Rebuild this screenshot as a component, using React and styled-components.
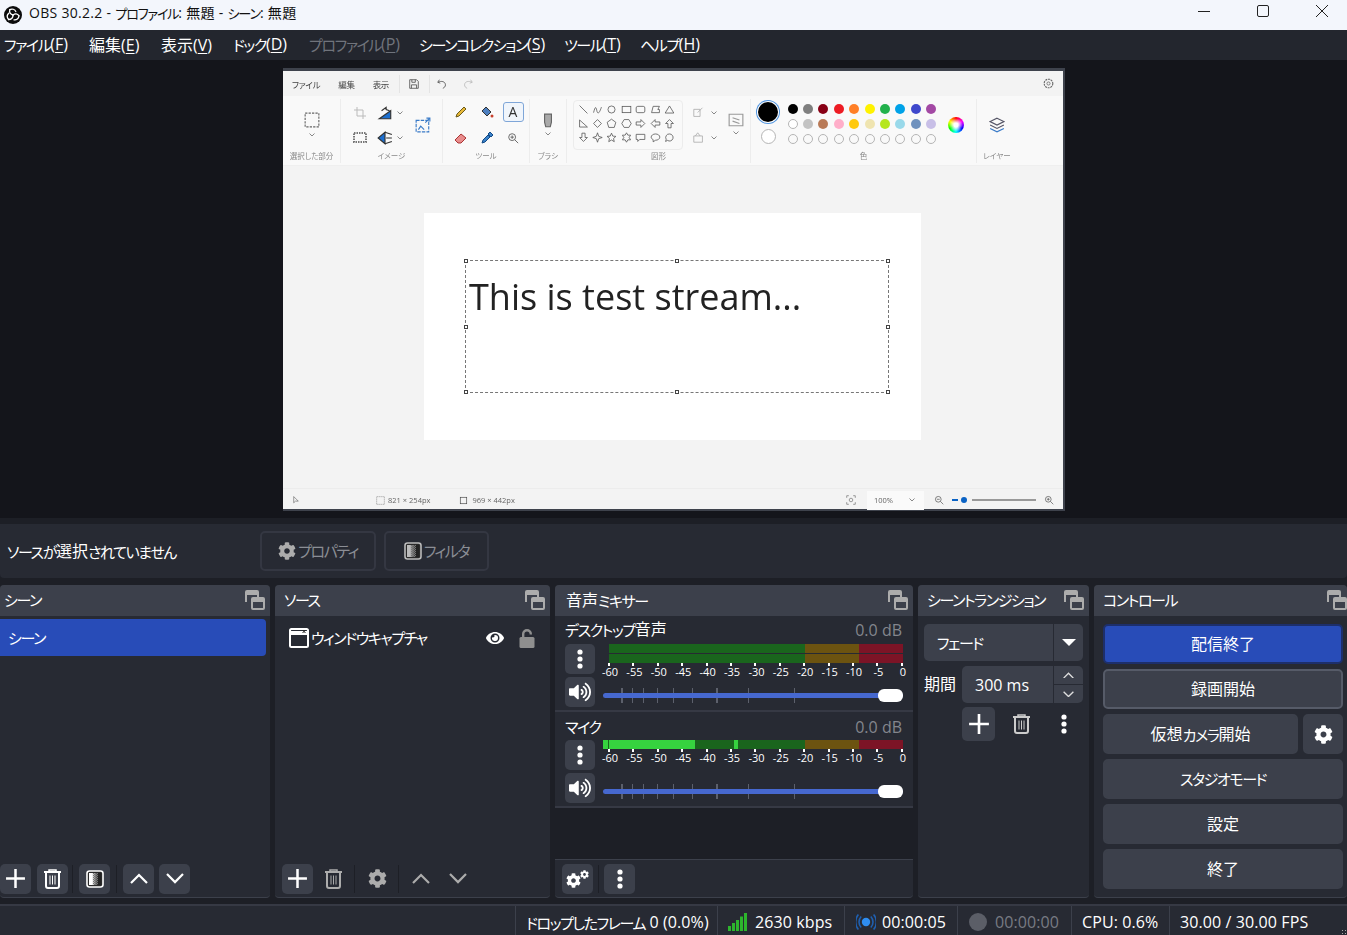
import React from 'react';
import styled, { createGlobalStyle } from 'styled-components';
import { FaCog, FaEye, FaVolumeUp } from 'react-icons/fa';

const Global = createGlobalStyle`
  html, body { margin: 0; padding: 0; background: #1d1f26; }
  body { font-family: "Open Sans", "Noto Sans CJK JP", sans-serif; font-size: 16px; color: #fff; }
  * { box-sizing: border-box; }
`;

const Window = styled.div`
  width: 1347px;
  height: 935px;
  overflow: hidden;
  display: flex;
  flex-direction: column;
  background: #1d1f26;
`;

const JpLine = styled.span`
  position: relative;
  top: ${(p) => p.$top ?? -1}px;
  white-space: nowrap;
`;
const Kana = styled.span`
  position: relative;
  top: 1px;
  font-size: 0.94em;
  font-feature-settings: "palt";
  letter-spacing: -0.095em;
`;
// the original face has narrow kana next to full width kanji, so only kana runs get squeezed
const Jp = ({ children, top }) => (
  <JpLine $top={top}>
    {String(children).split(/([\u3040-\u30ff]+)/).map((part, i) => (
      i % 2 ? <Kana key={i}>{part}</Kana> : part
    ))}
  </JpLine>
);

/* ---- title + menu ---- */
const TitleBar = styled.div`
  height: 30px;
  background: #f3f6fc;
  color: #111;
  display: flex;
  align-items: center;
  padding-left: 4px;
  font-size: 14px;
`;
const TitleText = styled.div`
  margin-left: 7px;
  flex: 1;
  position: relative;
  top: -3px;
  letter-spacing: 0.3px;
`;
const WinButtons = styled.div`
  display: flex;
  height: 100%;
  margin-right: -4px;
`;
const WinButton = styled.div`
  width: 59px;
  display: flex;
  align-items: center;
  justify-content: center;
  padding-bottom: 8px;
`;
const MenuBar = styled.div`
  height: 30px;
  background: #23262e;
  display: flex;
  align-items: center;
  padding: 0 0 3px 4px;
  gap: 20px;
`;
const MenuItem = styled.span`
  width: ${(p) => p.$w}px;
  flex: none;
  color: ${(p) => (p.$off ? '#70747c' : '#fff')};
  white-space: nowrap;
  u { text-underline-offset: 2px; }
`;

/* ---- preview ---- */
const Preview = styled.div`
  height: 458px;
  background: #14151b;
  padding: 8px 0 0 283px;
`;
const Paint = styled.div`
  width: 782px;
  height: 443px;
  background: #f3f3f3;
  border-top: 3px solid #3e424c;
  border-right: 2px solid #3e424c;
  border-bottom: 2px solid #3e424c;
  display: flex;
  flex-direction: column;
  color: #444;
  font-size: 8px;
  filter: blur(0.3px);
`;
const PaintMenu = styled.div`
  height: 25px;
  display: flex;
  align-items: center;
  padding: 0 9px 0 9px;
  font-size: 8.5px;
`;
const PaintMenuLabel = styled.span`
  margin-right: ${(p) => p.$mr}px;
  font-feature-settings: "palt";
  letter-spacing: -0.3px;
  white-space: nowrap;
`;
const VRule = styled.div`
  width: 1px;
  height: 18px;
  background: ${(p) => (p.$clear ? 'transparent' : '#e4e4e4')};
  margin: ${(p) => p.$m || '0'};
`;
const Spacer = styled.div`
  flex: 1;
`;
const Ribbon = styled.div`
  height: 70px;
  background: #f9f9f9;
  display: flex;
  border-bottom: 1px solid #efefef;
`;
const Group = styled.div`
  width: ${(p) => p.$w}px;
  flex: none;
  border-right: ${(p) => (p.$last ? '0' : '1px solid #ededed')};
  display: flex;
  flex-direction: column;
  height: 64px;
  margin-top: 3px;
`;
const GroupBody = styled.div`
  flex: 1;
  display: flex;
  min-height: 0;
`;
const GroupLabel = styled.div`
  height: 11px;
  line-height: 9px;
  text-align: center;
  font-size: 7.5px;
  color: #888;
  font-feature-settings: "palt";
  white-space: nowrap;
`;
const IconGrid = styled.div`
  display: grid;
  grid-template-columns: ${(p) => p.$tpl};
  grid-auto-rows: ${(p) => p.$rh}px;
  justify-items: center;
  align-items: center;
  padding: ${(p) => p.$pad || '0'};
`;
const CenterCol = styled.div`
  flex: 1;
  display: flex;
  flex-direction: column;
  align-items: center;
  padding-top: ${(p) => p.$top || 0}px;
  gap: ${(p) => p.$gap || 0}px;
`;
const TextTool = styled.div`
  width: 21px;
  height: 20px;
  border: 1px solid #7fa6d8;
  border-radius: 3px;
  background: #f0f5fb;
  font-size: 14px;
  line-height: 18px;
  text-align: center;
  color: #333;
`;
const ShapesBox = styled.div`
  width: 110px;
  height: 50px;
  margin: 1px 0 0 6px;
  border: 1px solid #ececec;
  border-radius: 4px;
  overflow: hidden;
  padding: 1px 0 0 2px;
`;
const Swatches = styled.div`
  display: grid;
  grid-template-columns: repeat(10, 15.4px);
  grid-auto-rows: 15.4px;
  justify-items: center;
  align-items: center;
  margin-top: 2px;
`;
const Swatch = styled.div`
  width: 10px;
  height: 10px;
  border-radius: 50%;
  background: ${(p) => p.$c || 'transparent'};
  border: ${(p) => (p.$c && p.$c !== '#fff' ? '0' : '1px solid #b5b5b5')};
`;
const CurrentCol = styled.div`
  width: 34px;
  display: flex;
  flex-direction: column;
  align-items: center;
  gap: 7px;
  padding-top: 3px;
`;
const CurrentBlack = styled.div`
  width: 20px;
  height: 20px;
  border-radius: 50%;
  background: #000;
  box-shadow: 0 0 0 1px #fff, 0 0 0 2px #4f94e0;
`;
const CurrentWhite = styled.div`
  width: 15px;
  height: 15px;
  border-radius: 50%;
  background: #fff;
  border: 1px solid #b5b5b5;
`;
const Wheel = styled.div`
  width: 16px;
  height: 16px;
  margin: 18px 0 0 9px;
  border-radius: 50%;
  background: radial-gradient(circle, #fff 0 18%, transparent 60%),
    conic-gradient(#f00, #f0f, #00f, #0ff, #0f0, #ff0, #f00);
`;
const Workspace = styled.div`
  flex: 1;
  padding: 47px 0 0 141px;
  background: #f3f3f3;
`;
const Canvas = styled.div`
  position: relative;
  width: 497px;
  height: 227px;
  background: #fff;
`;
const Selection = styled.div`
  position: absolute;
  left: 41px;
  top: 47px;
  width: 424px;
  height: 133px;
  border: 1px dashed #777;
  color: #222;
  font-size: 36px;
  line-height: 48px;
  padding: 12px 0 0 3px;
  white-space: nowrap;
`;
const Handle = styled.div`
  position: absolute;
  width: 4px;
  height: 4px;
  background: #fff;
  border: 1px solid #444;
  left: ${(p) => p.$x}%;
  top: ${(p) => p.$y}%;
  transform: translate(-50%, -50%);
`;
const PaintStatus = styled.div`
  height: 21px;
  display: flex;
  align-items: center;
  border-top: 1px solid #ececec;
  padding: 2px 0 0 9px;
  font-size: 7.5px;
  color: #666;
`;
const PaintStatusText = styled.span`
  margin: ${(p) => p.$m};
`;
const ZoomBox = styled.div`
  width: 57px;
  height: 19px;
  background: #fafafa;
  display: flex;
  align-items: center;
  justify-content: space-between;
  padding: 0 9px 0 7px;
  margin: 0 10px 0 11px;
`;
const ZoomTrack = styled.div`
  width: 84px;
  height: 2px;
  margin: 0 8px;
  background: linear-gradient(to right, #0a62c4 0 6px, transparent 6px 20px, #999 20px);
  position: relative;
`;
const ZoomThumb = styled.div`
  position: absolute;
  left: 9px;
  top: -2px;
  width: 6px;
  height: 6px;
  border-radius: 50%;
  background: #0a62c4;
`;

/* ---- context bar ---- */
const ContextBar = styled.div`
  height: 54px;
  margin-top: 6px;
  background: #272a33;
  border-radius: 0 0 4px 4px;
  display: flex;
  align-items: center;
  padding-left: 7px;
`;
const ContextLabel = styled.div`
  width: 253px;
`;
const ContextButton = styled.div`
  width: ${(p) => p.$w}px;
  height: 40px;
  margin-right: 8px;
  border: 2px solid #343742;
  border-radius: 5px;
  display: flex;
  align-items: center;
  justify-content: center;
  gap: 2px;
  color: #8b8e95;
`;

/* ---- docks ---- */
const Docks = styled.div`
  height: 313px;
  margin-top: 7px;
  display: flex;
  gap: 5px;
`;
const Dock = styled.div`
  width: ${(p) => p.$w}px;
  flex: none;
  background: #272a33;
  border-radius: 4px;
  border-bottom: 1px solid #3c404b;
  display: flex;
  flex-direction: column;
  overflow: hidden;
`;
const DockTitle = styled.div`
  height: 31px;
  flex: none;
  background: #3c404b;
  display: flex;
  align-items: center;
  justify-content: space-between;
  padding: 0 ${(p) => p.$pr ?? 5}px 2px ${(p) => p.$pl ?? 9}px;
`;
const DockBody = styled.div`
  flex: 1;
  min-height: 0;
  display: flex;
  flex-direction: column;
`;
const Toolbar = styled.div`
  height: 37px;
  flex: none;
  display: flex;
  align-items: center;
  padding-left: ${(p) => p.$pl ?? 0}px;
  gap: ${(p) => p.$gap ?? 5}px;
`;
const ToolButton = styled.div`
  width: 31px;
  height: 30px;
  flex: none;
  margin-left: ${(p) => p.$ml || 0}px;
  border-radius: 5px;
  background: ${(p) => (p.$flat ? 'transparent' : '#3c404b')};
  display: flex;
  align-items: center;
  justify-content: center;
  color: ${(p) => (p.$flat ? '#acacac' : '#fff')};
`;
const ToolSep = styled.div`
  width: 1px;
  height: 28px;
  background: #1d1f26;
  margin: 0 ${(p) => p.$r || 0}px 0 ${(p) => p.$l || 0}px;
`;
const SceneRow = styled.div`
  margin-top: 3px;
  width: 266px;
  height: 37px;
  background: #284cb8;
  border-radius: 0 4px 4px 0;
  display: flex;
  align-items: center;
  padding-left: 8px;
`;
const SourceRow = styled.div`
  margin-top: 3px;
  height: 37px;
  display: flex;
  align-items: center;
  padding-left: 14px;
`;
const SourceName = styled.div`
  flex: 1;
  margin-left: 2px;
`;
const SourceIcons = styled.div`
  display: flex;
  align-items: center;
  gap: 15px;
  padding-right: 15px;
`;
const GearPair = styled.div`
  display: flex;
  align-items: flex-start;
  height: 18px;
  svg:first-child { margin-top: 3px; }
  svg:last-child { margin-left: -1px; }
`;

/* ---- mixer ---- */
const MixerItem = styled.div`
  height: 96px;
  flex: none;
  border-bottom: 2px solid #363944;
  padding: 4px 10px 0 10px;
`;
const MixerHead = styled.div`
  display: flex;
  justify-content: space-between;
  height: 24px;
  line-height: 20px;
  padding: ${(p) => (p.$low ? 1 : 0)}px 1px 0 0;
`;
const DbValue = styled.span`
  color: #83868d;
`;
const MixerMain = styled.div`
  display: grid;
  grid-template-columns: 30px 1fr;
  column-gap: 8px;
  row-gap: 3px;
  grid-auto-rows: 30px;
`;
const MixerButton = styled.div`
  background: #3c404b;
  border-radius: 5px;
  display: flex;
  align-items: center;
  justify-content: center;
`;
const MeterWrap = styled.div`
  padding-left: ${(p) => (p.$mono ? 0 : 6)}px;
`;
const MeterBar = styled.div`
  height: 9px;
  margin-bottom: 1px;
  background: ${(p) => p.$bg};
`;
const Scale = styled.div`
  position: relative;
  display: flex;
  justify-content: space-between;
  margin: 0 1px 0 ${(p) => (p.$mono ? 6 : 0)}px;
  height: 14px;
`;
const ScaleMark = styled.div`
  width: 0;
  display: flex;
  justify-content: center;
  font-size: 11px;
  line-height: 16px;
  position: relative;
  left: 1px;
  &::before {
    content: '';
    position: absolute;
    top: -1px;
    left: -2px;
    width: 2px;
    height: 3px;
    background: #fff;
  }
`;
const Slider = styled.div`
  position: relative;
  align-self: center;
  height: 5px;
  margin-top: ${(p) => p.$top}px;
`;
const SliderTick = styled.div`
  position: absolute;
  left: ${(p) => p.$x}px;
  top: -5px;
  width: ${(p) => (p.$major ? 2 : 1)}px;
  height: 15px;
  background: #5c606c;
`;
const SliderFill = styled.div`
  position: absolute;
  inset: 0;
  border-radius: 3px;
  background: #4668cf;
`;
const SliderKnob = styled.div`
  position: absolute;
  right: 0;
  top: -4px;
  width: 25px;
  height: 13px;
  border-radius: 6px;
  background: #fff;
`;
const MixerFill = styled.div`
  flex: 1;
  background: #1d1f26;
  border-bottom: 1px solid #3c404b;
`;

/* ---- transitions ---- */
const TransBody = styled.div`
  padding: 8px 6px 0 6px;
  display: flex;
  flex-direction: column;
`;
const Combo = styled.div`
  height: 37px;
  border-radius: 5px;
  background: #3c404b;
  display: flex;
  align-items: center;
  margin-bottom: ${(p) => p.$mb ?? 5}px;
  flex: ${(p) => (p.$grow ? 1 : 'none')};
`;
const ComboText = styled.div`
  flex: 1;
  padding-left: 13px;
`;
const ComboSide = styled.div`
  width: 30px;
  height: 100%;
  border-left: 1px solid #272a33;
  display: flex;
  flex-direction: column;
  align-items: center;
  justify-content: center;
`;
const SpinHalf = styled.div`
  flex: 1;
  width: 100%;
  display: flex;
  align-items: center;
  justify-content: center;
  border-top: ${(p) => (p.$bottom ? '1px solid #272a33' : '0')};
`;
const DurationRow = styled.div`
  display: flex;
  align-items: flex-start;
`;
const DurationLabel = styled.div`
  width: 38px;
  height: 37px;
  line-height: 37px;
`;
const TransTools = styled.div`
  display: flex;
  align-items: center;
  padding-left: 38px;
`;
const PlusTall = styled(ToolButton)`
  width: 33px;
  height: 34px;
`;
const TransIcon = styled.div`
  width: ${(p) => p.$w}px;
  display: flex;
  justify-content: center;
`;

/* ---- controls ---- */
const ControlBody = styled.div`
  padding: 8px 4px 0 9px;
  display: flex;
  flex-direction: column;
  gap: 5px;
`;
const ControlButton = styled.div`
  height: 40px;
  flex: ${(p) => (p.$grow ? 1 : 'none')};
  width: ${(p) => (p.$square ? '40px' : 'auto')};
  border-radius: 5px;
  background: ${(p) => (p.$primary ? '#284cb8' : '#3c404b')};
  border: 2px solid ${(p) => (p.$primary ? '#1d2f6b' : p.$outlined ? '#565b68' : '#3c404b')};
  display: flex;
  align-items: center;
  justify-content: center;
`;
const ControlRow = styled.div`
  display: flex;
  gap: 5px;
`;

/* ---- status ---- */
const StatusBar = styled.div`
  height: 31px;
  margin-top: 6px;
  background: #272a33;
  border-top: 2px solid #363944;
  display: flex;
  padding-left: 515px;
  position: relative;
  letter-spacing: 0.1px;
`;
const StatusCell = styled.div`
  width: ${(p) => p.$w}px;
  flex: none;
  border-left: 1px solid #3c404b;
  display: flex;
  align-items: center;
  padding-left: ${(p) => p.$pl ?? 10}px;
  padding-top: 3px;
  gap: ${(p) => p.$gap ?? 6}px;
  white-space: nowrap;
  color: ${(p) => (p.$dim ? '#787b83' : '#fff')};
`;
const RecDot = styled.div`
  width: 18px;
  height: 18px;
  border-radius: 50%;
  background: #5b5e67;
`;
const Grip = styled.div`
  position: absolute;
  right: 0;
  bottom: 0;
  width: 6px;
  height: 6px;
  background: radial-gradient(circle, #aaa 0 1px, transparent 1px) 0 0 / 3px 3px;
`;

/* ---- icons ---- */
const Undock = () => (
  <svg width="20" height="20" viewBox="0 0 20 20" fill="none" stroke="#acacac" strokeWidth="2">
    <path d="M1 12V2a1 1 0 0 1 1-1h10a1 1 0 0 1 1 1v5" />
    <path d="M1 3.5h12" strokeWidth="3" />
    <rect x="7" y="8" width="12" height="11" rx="1" fill="#3c404b" />
    <path d="M7 10.5h12" strokeWidth="3" />
  </svg>
);
const Plus = ({ s = 21 }) => (
  <svg width={s} height={s} viewBox="0 0 20 20" stroke="#fff" strokeWidth="2.4"><path d="M10 1v18M1 10h18" /></svg>
);
const Trash = ({ c = '#fff' }) => (
  <svg width="19" height="20" viewBox="0 0 19 20" fill="none" stroke={c}>
    <path d="M1 3h17" strokeWidth="2" />
    <path d="M6 2.5V1h7v1.5" strokeWidth="1.5" />
    <path d="M3 4v13a2 2 0 0 0 2 2h9a2 2 0 0 0 2-2V4" strokeWidth="2" />
    <path d="M7 6.5v9M9.5 6.5v9M12 6.5v9" strokeWidth="1" />
  </svg>
);
const Dots = () => (
  <svg width="6" height="20" viewBox="0 0 6 20" fill="#fff">
    <circle cx="3" cy="3" r="2.6" /><circle cx="3" cy="10" r="2.6" /><circle cx="3" cy="17" r="2.6" />
  </svg>
);
const Chevron = ({ up, c = '#fff', w = 18 }) => (
  <svg width={w} height={w * 0.62} viewBox="0 0 18 11" fill="none" stroke={c} strokeWidth="2.2">
    <path d={up ? 'M1 10l8-8 8 8' : 'M1 1l8 8 8-8'} />
  </svg>
);
const FilterIcon = ({ id, c = '#fff', s = 18 }) => (
  <svg width={s} height={s} viewBox="0 0 18 18">
    <defs>
      <linearGradient id={id}>
        <stop offset="0.25" stopColor={c} /><stop offset="0.75" stopColor="#222" />
      </linearGradient>
      <pattern id={`${id}d`} width="2" height="2" patternUnits="userSpaceOnUse">
        <rect width="1" height="1" fill="#777" /><rect x="1" y="1" width="1" height="1" fill="#777" />
      </pattern>
    </defs>
    <rect x="1" y="1" width="16" height="16" rx="2.5" fill="#2a2a2a" stroke={c} strokeWidth="1.6" />
    <rect x="3" y="3" width="12" height="12" fill={`url(#${id})`} />
    <rect x="7" y="3" width="5" height="12" fill={`url(#${id}d)`} />
  </svg>
);
const WindowIcon = () => (
  <svg width="20" height="20" viewBox="0 0 20 20" fill="none">
    <rect x="1" y="1" width="18" height="18" rx="1.5" stroke="#fff" strokeWidth="2" />
    <path d="M1 3h18v4H1z" fill="#fff" />
    <path d="M13.5 2l3 3M16.5 2l-3 3" stroke="#222" />
  </svg>
);
const Lock = () => (
  <svg width="16" height="20" viewBox="0 0 16 20" fill="#8f8f8f">
    <path d="M3 9V6a5 5 0 0 1 10 0v.5h-2.4V6a2.6 2.6 0 0 0-5.2 0v3z" />
    <rect x="0.5" y="9" width="15" height="11" rx="1.5" />
  </svg>
);
const ObsLogo = () => (
  <svg width="18" height="18" viewBox="0 0 18 18" fill="none" stroke="#fff" strokeWidth="1.3" strokeLinecap="round">
    <circle cx="9" cy="9" r="9" fill="#0c0c0c" stroke="none" />
    <path d="M9 9C6.500 8.500 5 6.500 5.800 3.600" />
    <path d="M5.800 3.600C8 2.400 11 3.200 11.800 5.600" />
    <path d="M9 9C11 7.500 13.500 7.500 15 9.800" />
    <path d="M15 9.800C14.800 12.500 12.500 14.200 10 13.800" />
    <path d="M9 9C9.200 11.500 7.500 13.500 4.600 13.500" />
    <path d="M4.600 13.500C3 11.500 3 8.800 4.800 7.200" />
  </svg>
);
const Bars = () => (
  <svg width="19" height="18" viewBox="0 0 19 18" fill="#2db52d">
    <rect x="0" y="13" width="3" height="5" /><rect x="4" y="10" width="3" height="8" />
    <rect x="8" y="7" width="3" height="11" /><rect x="12" y="3.5" width="3" height="14.5" />
    <rect x="16" y="0" width="3" height="18" />
  </svg>
);
const Broadcast = () => (
  <svg width="20" height="20" viewBox="0 0 20 20" fill="none" stroke="#1f5fb0" strokeWidth="1.6">
    <circle cx="10" cy="10" r="4.2" fill="#2f8df0" stroke="none" />
    <path d="M5.2 4.5a8 8 0 0 0 0 11M14.8 4.5a8 8 0 0 1 0 11" />
    <path d="M2.4 2.5a11.5 11.5 0 0 0 0 15M17.6 2.5a11.5 11.5 0 0 1 0 15" />
  </svg>
);

/* paint's own little toolbar drawings */
const Pi = ({ s = 14, children, fill = 'none', c = '#555', sw = 1 }) => (
  <svg width={s} height={s} viewBox="0 0 14 14" fill={fill} stroke={c} strokeWidth={sw}>{children}</svg>
);
const Chev = () => (
  <svg width="6" height="4" viewBox="0 0 6 4" fill="none" stroke="#888"><path d="M.5.5 3 3 5.500.5" /></svg>
);

const shapes = [
  'M2 2l10 10',
  'M2 11c2-8 3-8 4-3s3 5 6-4',
  <circle key="c" cx="7" cy="7" r="4.500" />,
  <rect key="r" x="1.500" y="3" width="11" height="8" />,
  <rect key="rr" x="1.500" y="3" width="11" height="8" rx="2" />,
  'M2 11l2-8h8l-2 4h2v4z',
  'M7 2.500l5.500 9h-11z',
  'M2 2.500v9h10z',
  'M7 2l5 5-5 5-5-5z',
  'M7 1.500l5.500 4-2 6.500h-7l-2-6.500z',
  'M4 2h6l3 5-3 5H4L1 7z',
  'M1.500 5h6V2l5 5-5 5V9h-6z',
  'M12.500 5h-6V2l-5 5 5 5V9h6z',
  'M5 12.500V7H2l5-5 5 5H9v5.500z',
  'M5 1.500V7H2l5 5 5-5H9V1.500z',
  'M7 1l1.500 4.500L13 7l-4.500 1.500L7 13l-1.500-4.500L1 7l4.500-1.500z',
  'M7 1.500l1.600 3.700 4 .4-3 2.700.9 4L7 10.200l-3.500 2.100.9-4-3-2.700 4-.4z',
  'M7 1l1.700 3 3.500 0-1.800 3 1.800 3-3.500 0L7 13l-1.700-3-3.500 0 1.800-3-1.800-3 3.500 0z',
  'M1.500 3h11v6.500H6L3.500 12V9.500h-2z',
  'M7 2.500c3 0 5.500 1.800 5.500 4S10 10.500 7 10.500l-3 2v-2.800C2.500 9 1.500 8 1.500 6.500c0-2.200 2.500-4 5.500-4z',
  'M7 2.500a4.500 4.500 0 1 1-2.500 8.200L2 12l.8-2.700A4.500 4.500 0 0 1 7 2.500z',
  'M2 9c1-3 4-3 5 0 1-3 4-3 5 0',
  'M7 4l3 4H4z',
];

const row1 = ['#000', '#7f7f7f', '#880015', '#ed1c24', '#ff7f27', '#fff200', '#22b14c', '#00a2e8', '#3f48cc', '#a349a4'];
const row2 = ['#fff', '#c3c3c3', '#b97a57', '#ffaec9', '#ffc90e', '#efe4b0', '#b5e61d', '#99d9ea', '#7092be', '#c8bfe7'];
const row3 = Array(10).fill(null);

const PaintWindow = () => (
  <Paint>
    <PaintMenu>
      <PaintMenuLabel $mr={18}>ファイル</PaintMenuLabel>
      <PaintMenuLabel $mr={18}>編集</PaintMenuLabel>
      <PaintMenuLabel $mr={10}>表示</PaintMenuLabel>
      <VRule $m="0 8px 0 0" />
      <Pi s={12}><path d="M2 2h8l2 2v8H2zM4.500 2v3h4V2M4 12V8h6v4" /></Pi>
      <VRule $m="0 6px 0 9px" />
      <Pi s={12}><path d="M4 2 2 5l3 1M2.500 5C6 3 11 4 11 8c0 2-1 3-3 4" /></Pi>
      <VRule $clear $m="0 13px 0 0" />
      <Pi s={12} c="#bbb"><path d="M10 2l2 3-3 1M11.500 5C8 3 3 4 3 8c0 2 1 3 3 4" /></Pi>
      <Spacer />
      <Pi s={11} c="#666"><circle cx="7" cy="7" r="2" /><circle cx="7" cy="7" r="5.500" strokeDasharray="2.500 1" strokeWidth="1.400" /></Pi>
    </PaintMenu>
    <Ribbon>
      <Group $w={58}>
        <GroupBody>
          <CenterCol $top={13} $gap={5}>
            <Pi s={16} c="#666"><rect x="1" y="1" width="12" height="12" strokeDasharray="2 1" /></Pi>
            <Chev />
          </CenterCol>
        </GroupBody>
        <GroupLabel>選択した部分</GroupLabel>
      </Group>
      <Group $w={102}>
        <GroupBody>
          <IconGrid $tpl="25px 25px 6px" $rh={25} $pad="1px 0 0 6px">
            <Pi c="#bbb"><path d="M4 1v9h9M1 4h9v9" /></Pi>
            <Pi s={16} c="#333"><path d="M2 12h10V5z" fill="#1c6fd0" /><path d="M4 5l4-3v2l3 1" /></Pi>
            <Chev />
            <Pi c="#777"><path d="M1 2h12v9H1z" strokeDasharray="1.500 1" strokeWidth="2" /></Pi>
            <Pi s={16} c="#333"><path d="M7 2v10L1 7z" fill="#1c6fd0" /><path d="M7 2l6 2M7 12l6-2M13 7H8" /></Pi>
            <Chev />
          </IconGrid>
          <CenterCol $top={18}>
            <Pi s={16} c="#3a7bc8"><rect x="1" y="3" width="11" height="10" strokeDasharray="3 1" /><path d="M9 5l4-4M10 1h3v3M3 11l2-3 3 3" /></Pi>
          </CenterCol>
        </GroupBody>
        <GroupLabel>イメージ</GroupLabel>
      </Group>
      <Group $w={87}>
        <GroupBody>
          <IconGrid $tpl="repeat(3, 26px)" $rh={26} $pad="0 0 0 5px">
            <Pi c="#6a5a1a" fill="#e8b93a"><path d="M2 12l1-3 7-7 2 2-7 7z" /></Pi>
            <Pi c="#333" fill="#4d7fbf"><path d="M2 6l4-4 5 5-4 4z" /><circle cx="12" cy="11" r="1.500" fill="#c8402c" stroke="none" /></Pi>
            <TextTool>A</TextTool>
            <Pi c="#a33" fill="#e98d8d"><path d="M1 9l6-6 5 4-5 5H4z" /></Pi>
            <Pi c="#124a86" fill="#3b82c9"><path d="M2 12l1-3 5-5 2 2-5 5zM8 3l2-2 3 3-2 2z" /></Pi>
            <Pi s={12}><circle cx="6" cy="6" r="4" /><path d="M9 9l4 4M4 6h4M6 4v4" /></Pi>
          </IconGrid>
        </GroupBody>
        <GroupLabel>ツール</GroupLabel>
      </Group>
      <Group $w={37}>
        <GroupBody>
          <CenterCol $top={14} $gap={3}>
            <Pi s={16} c="#666" fill="#aaa"><path d="M4 1h6v7l-1 4H5L4 8z" /></Pi>
            <Chev />
          </CenterCol>
        </GroupBody>
        <GroupLabel>ブラシ</GroupLabel>
      </Group>
      <Group $w={184}>
        <GroupBody>
          <ShapesBox>
            <IconGrid $tpl="repeat(7, 14.4px)" $rh={14.4}>
              {shapes.map((d, i) => (
                <Pi key={i} s={11}>{typeof d === 'string' ? <path d={d} /> : d}</Pi>
              ))}
            </IconGrid>
          </ShapesBox>
          <IconGrid $tpl="repeat(2, 15px)" $rh={25} $pad="1px 0 0 8px">
            <Pi s={11} c="#aaa"><path d="M1 3h8v9H1zM6 7l6-6" /></Pi>
            <Chev />
            <Pi s={11} c="#aaa"><path d="M1 5h11v8H1zM3 5l3-4 3 4" /></Pi>
            <Chev />
          </IconGrid>
          <CenterCol $top={13} $gap={3}>
            <Pi s={16} c="#999"><path d="M1 2h12v10H1zM4 5l6 2M4 8l6 2" /></Pi>
            <Chev />
          </CenterCol>
        </GroupBody>
        <GroupLabel>図形</GroupLabel>
      </Group>
      <Group $w={226}>
        <GroupBody>
          <CurrentCol>
            <CurrentBlack />
            <CurrentWhite />
          </CurrentCol>
          <Swatches>
            {[...row1, ...row2, ...row3].map((c, i) => <Swatch key={i} $c={c} />)}
          </Swatches>
          <Wheel />
        </GroupBody>
        <GroupLabel>色</GroupLabel>
      </Group>
      <Group $w={40} $last>
        <GroupBody>
          <CenterCol $top={18}>
            <Pi s={16} c="#556"><path d="M7 1l6 3-6 3-6-3z" /><path d="M1 7l6 3 6-3" /><path d="M1 10l6 3 6-3" stroke="#3a7bc8" /></Pi>
          </CenterCol>
        </GroupBody>
        <GroupLabel>レイヤー</GroupLabel>
      </Group>
    </Ribbon>
    <Workspace>
      <Canvas>
        <Selection>
          This is test stream...
          {[[0, 0], [50, 0], [100, 0], [0, 50], [100, 50], [0, 100], [50, 100], [100, 100]].map(([x, y]) => (
            <Handle key={`${x}-${y}`} $x={x} $y={y} />
          ))}
        </Selection>
      </Canvas>
    </Workspace>
    <PaintStatus>
      <Pi s={8}><path d="M3 1v11l3-3h5z" /></Pi>
      <VRule $clear $m="0 0 0 75px" />
      <Pi s={9} c="#888"><rect x="1" y="1" width="12" height="12" strokeDasharray="2 1" /></Pi>
      <PaintStatusText $m="0 29px 0 3px">821 × 254px</PaintStatusText>
      <Pi s={9} c="#444"><rect x="2" y="2" width="10" height="10" /></Pi>
      <PaintStatusText $m="0 0 0 4px">969 × 442px</PaintStatusText>
      <Spacer />
      <Pi s={10} c="#777"><path d="M1 4V1h3M10 1h3v3M13 10v3h-3M4 13H1v-3" /><circle cx="7" cy="7" r="2.500" /></Pi>
      <ZoomBox>100%<Chev /></ZoomBox>
      <Pi s={10}><circle cx="6" cy="6" r="4" /><path d="M9 9l4 4M4 6h4" /></Pi>
      <ZoomTrack><ZoomThumb /></ZoomTrack>
      <Pi s={10}><circle cx="6" cy="6" r="4" /><path d="M9 9l4 4M4 6h4M6 4v4" /></Pi>
      <VRule $clear $m="0 8px 0 0" />
    </PaintStatus>
  </Paint>
);

const scaleLabels = [-60, -55, -50, -45, -40, -35, -30, -25, -20, -15, -10, -5, 0];
const tickXs = [18, 29, 40, 54, 70, 89, 113, 145, 191];

const VolSlider = ({ top }) => (
  <Slider $top={top}>
    {tickXs.map((x, i) => <SliderTick key={x} $x={x} $major={i === 0 || i === 6} />)}
    <SliderFill />
    <SliderKnob />
  </Slider>
);

const stereo = 'linear-gradient(to right, #1a651d 0 196px, #6c5310 196px 250px, #7c1426 250px)';
const mono = `linear-gradient(to right, #36d33f 0 5px, #1a651d 5px 6px, #36d33f 6px 92px, #1a651d 92px 131px,
  #36d33f 131px 135px, #1a651d 135px 202px, #6c5310 202px 256px, #7c1426 256px)`;

const ScaleRow = ({ mono: isMono }) => (
  <Scale $mono={isMono}>
    {scaleLabels.map((n) => <ScaleMark key={n}>{n}</ScaleMark>)}
  </Scale>
);

const MixerChannel = ({ name, isMono }) => (
  <MixerItem>
    <MixerHead $low={isMono}>
      <Jp>{name}</Jp>
      <DbValue>0.0 dB</DbValue>
    </MixerHead>
    <MixerMain>
      <MixerButton><Dots /></MixerButton>
      <MeterWrap $mono={isMono}>
        {isMono ? <MeterBar $bg={mono} /> : (<><MeterBar $bg={stereo} /><MeterBar $bg={stereo} /></>)}
        <ScaleRow mono={isMono} />
      </MeterWrap>
      <MixerButton><FaVolumeUp size={22} color="#fff" /></MixerButton>
      <VolSlider top={isMono ? 7 : 6} />
    </MixerMain>
  </MixerItem>
);

const controls = ['スタジオモード', '設定', '終了'];

const menus = [
  { label: 'ファイル', k: 'F', w: 65 },
  { label: '編集', k: 'E', w: 52 },
  { label: '表示', k: 'V', w: 52 },
  { label: 'ドック', k: 'D', w: 56 },
  { label: 'プロファイル', k: 'P', w: 90, off: true },
  { label: 'シーンコレクション', k: 'S', w: 125 },
  { label: 'ツール', k: 'T', w: 56 },
  { label: 'ヘルプ', k: 'H', w: 60 },
];

export default function App() {
  return (
    <Window>
      <Global />
      <TitleBar>
        <ObsLogo />
        <TitleText><Jp top={0}>OBS 30.2.2 - プロファイル: 無題 - シーン: 無題</Jp></TitleText>
        <WinButtons>
          <WinButton><svg width="12" height="12" stroke="#222"><path d="M0 6.500h12" /></svg></WinButton>
          <WinButton><svg width="12" height="12" fill="none" stroke="#222"><rect x=".5" y=".5" width="11" height="11" rx="1.500" /></svg></WinButton>
          <WinButton><svg width="12" height="12" stroke="#222"><path d="M0 0l12 12M12 0 0 12" /></svg></WinButton>
        </WinButtons>
      </TitleBar>
      <MenuBar>
        {menus.map((m) => (
          <MenuItem key={m.k} $w={m.w} $off={m.off}><Jp top={0}>{m.label}</Jp>(<u>{m.k}</u>)</MenuItem>
        ))}
      </MenuBar>
      <Preview><PaintWindow /></Preview>
      <ContextBar>
        <ContextLabel><Jp>ソースが選択されていません</Jp></ContextLabel>
        <ContextButton $w={116}><FaCog size={18} color="#acacac" /><Jp>プロパティ</Jp></ContextButton>
        <ContextButton $w={105}><FilterIcon id="fa" c="#bbb" /><Jp>フィルタ</Jp></ContextButton>
      </ContextBar>
      <Docks>
        <Dock $w={270}>
          <DockTitle $pl={4}><Jp>シーン</Jp><Undock /></DockTitle>
          <DockBody>
            <SceneRow><Jp>シーン</Jp></SceneRow>
            <Spacer />
            <Toolbar>
              <ToolButton><Plus /></ToolButton>
              <ToolButton $ml={1}><Trash /></ToolButton>
              <ToolSep $l={-1} $r={1} />
              <ToolButton><FilterIcon id="fb" /></ToolButton>
              <ToolSep $l={1} $r={1} />
              <ToolButton><Chevron up /></ToolButton>
              <ToolButton><Chevron /></ToolButton>
            </Toolbar>
          </DockBody>
        </Dock>
        <Dock $w={275}>
          <DockTitle><Jp>ソース</Jp><Undock /></DockTitle>
          <DockBody>
            <SourceRow>
              <WindowIcon />
              <SourceName><Jp>ウィンドウキャプチャ</Jp></SourceName>
              <SourceIcons>
                <FaEye size={18} color="#fff" />
                <Lock />
              </SourceIcons>
            </SourceRow>
            <Spacer />
            <Toolbar $pl={7}>
              <ToolButton><Plus /></ToolButton>
              <ToolButton $flat><Trash c="#acacac" /></ToolButton>
              <ToolSep $r={2} />
              <ToolButton $flat><FaCog size={19} /></ToolButton>
              <ToolSep $r={1} />
              <ToolButton $flat><Chevron up c="#acacac" /></ToolButton>
              <ToolButton $flat $ml={1}><Chevron c="#acacac" /></ToolButton>
            </Toolbar>
          </DockBody>
        </Dock>
        <Dock $w={358}>
          <DockTitle $pl={11}><Jp>音声ミキサー</Jp><Undock /></DockTitle>
          <DockBody>
            <MixerChannel name="デスクトップ音声" />
            <MixerChannel name="マイク" isMono />
            <MixerFill />
            <Toolbar $pl={7} $gap={5}>
              <ToolButton>
                <GearPair><FaCog size={15} /><FaCog size={9} /></GearPair>
              </ToolButton>
              <ToolSep />
              <ToolButton><Dots /></ToolButton>
            </Toolbar>
          </DockBody>
        </Dock>
        <Dock $w={171}>
          <DockTitle><Jp>シーントランジション</Jp><Undock /></DockTitle>
          <TransBody>
            <Combo>
              <ComboText><Jp>フェード</Jp></ComboText>
              <ComboSide>
                <svg width="14" height="7" fill="#fff"><path d="M0 0h14L7 7z" /></svg>
              </ComboSide>
            </Combo>
            <DurationRow>
              <DurationLabel><Jp top={0}>期間</Jp></DurationLabel>
              <Combo $grow $mb={4}>
                <ComboText>300 ms</ComboText>
                <ComboSide>
                  <SpinHalf><Chevron up w={11} c="#ddd" /></SpinHalf>
                  <SpinHalf $bottom><Chevron w={11} c="#ddd" /></SpinHalf>
                </ComboSide>
              </Combo>
            </DurationRow>
            <TransTools>
              <PlusTall><Plus s={22} /></PlusTall>
              <TransIcon $w={53}><Trash c="#ccc" /></TransIcon>
              <TransIcon $w={32}><Dots /></TransIcon>
            </TransTools>
          </TransBody>
        </Dock>
        <Dock $w={253}>
          <DockTitle $pr={0}><Jp>コントロール</Jp><Undock /></DockTitle>
          <ControlBody>
            <ControlButton $primary><Jp>配信終了</Jp></ControlButton>
            <ControlButton $outlined><Jp>録画開始</Jp></ControlButton>
            <ControlRow>
              <ControlButton $grow><Jp>仮想カメラ開始</Jp></ControlButton>
              <ControlButton $square><FaCog size={19} /></ControlButton>
            </ControlRow>
            {controls.map((c) => <ControlButton key={c}><Jp>{c}</Jp></ControlButton>)}
          </ControlBody>
        </Dock>
      </Docks>
      <StatusBar>
        <StatusCell $w={202} $gap={0}><Jp top={0}>ドロップしたフレーム</Jp>&nbsp;0 (0.0%)</StatusCell>
        <StatusCell $w={127} $gap={8}><Bars />2630 kbps</StatusCell>
        <StatusCell $w={113} $pl={11}><Broadcast />00:00:05</StatusCell>
        <StatusCell $w={114} $pl={11} $gap={8} $dim><RecDot />00:00:00</StatusCell>
        <StatusCell $w={98}>CPU: 0.6%</StatusCell>
        <StatusCell $w={178}>30.00 / 30.00 FPS</StatusCell>
        <Grip />
      </StatusBar>
    </Window>
  );
}
